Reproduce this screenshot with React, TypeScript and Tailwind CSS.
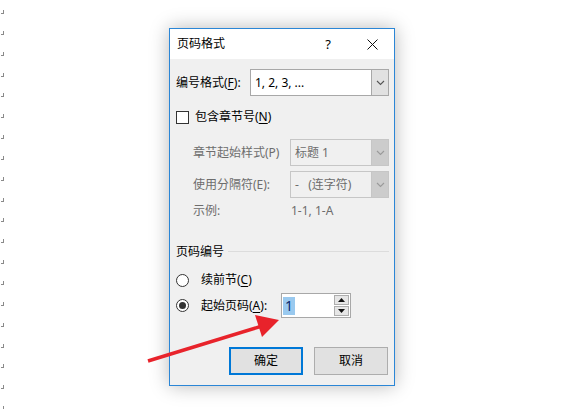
import type { ReactNode } from "react";

const font = { fontFamily: '"Noto Sans", "Noto Sans CJK SC", sans-serif' };

function Chevron({ color = "#606060" }: { color?: string }) {
  return (
    <svg width="9" height="6" viewBox="0 0 9 6">
      <path d="M1 1 L4.5 4.5 L8 1" fill="none" stroke={color} strokeWidth="1.1" />
    </svg>
  );
}

function Select({ value, disabled }: { value: string; disabled?: boolean }) {
  return (
    <div
      className={
        "flex h-[27px] flex-1 border " +
        (disabled ? "border-[#c6c6c6] bg-[#f0f0f0] text-[#6d6d6d]" : "border-[#a8a8a8] bg-white text-black")
      }
    >
      <div className="flex flex-1 items-center whitespace-pre pl-[4px]">{value}</div>
      <div
        className={
          "flex w-[17px] items-center justify-center border-l " +
          (disabled ? "border-[#c6c6c6] bg-[#cccccc]" : "border-[#a8a8a8] bg-[#e1e1e1]")
        }
      >
        <Chevron color={disabled ? "#9a9a9a" : "#555555"} />
      </div>
    </div>
  );
}

function Key({ children }: { children: ReactNode }) {
  return <span className="underline underline-offset-2">{children}</span>;
}

function Radio({ checked }: { checked?: boolean }) {
  return (
    <span className="flex h-[13px] w-[13px] items-center justify-center rounded-full border border-[#333] bg-white">
      {checked && <span className="h-[7px] w-[7px] rounded-full bg-[#333]" />}
    </span>
  );
}

function Marks() {
  return (
    <div className="flex w-[3px] flex-col pt-[10px]">
      {Array.from({ length: 20 }).map((_, i) => (
        <div key={i} className="h-[20.85px] shrink-0">
          <div className="h-[4px] w-[3px] border-b border-r border-[#8a8a8a]" />
        </div>
      ))}
    </div>
  );
}

function Dialog() {
  return (
    <div className="ml-[165px] mt-[28px] flex h-[358px] w-[226px] flex-col border border-[#2b86d6] bg-[#f0f0f0] text-[12px] leading-none shadow-[0_0_18px_rgba(0,0,0,0.28)]">
      {/* title bar */}
      <div className="flex h-[30px] items-center bg-white">
        <div className="flex-1 pl-[7px]">页码格式</div>
        <div className="flex w-[44px] justify-center text-[13px]">?</div>
        <div className="flex w-[44px] justify-center">
          <svg width="11" height="11" viewBox="0 0 11 11">
            <path d="M0.5 0.5 L10.5 10.5 M10.5 0.5 L0.5 10.5" stroke="#111" strokeWidth="1" />
          </svg>
        </div>
      </div>

      <div className="flex flex-col pl-[6px] pr-[5px] pt-[10px]">
        <div className="flex items-center">
          <div className="w-[74px]">
            编号格式(<Key>F</Key>):
          </div>
          <Select value="1, 2, 3, ..." />
        </div>

        <div className="mt-[13px] flex h-[16px] items-center gap-[6px]">
          <span className="h-[13px] w-[13px] border border-[#333] bg-white" />
          <span>
            包含章节号(<Key>N</Key>)
          </span>
        </div>

        <div className="mt-[14px] flex flex-col gap-[5px] pl-[17px] text-[#6d6d6d]">
          <div className="flex items-center">
            <div className="w-[97px]">章节起始样式(P)</div>
            <Select value="标题 1" disabled />
          </div>
          <div className="flex items-center">
            <div className="w-[97px]">使用分隔符(E):</div>
            <Select value={"-   (连字符)"} disabled />
          </div>
          <div className="flex h-[16px] items-center">
            <div className="w-[98px]">示例:</div>
            <div>1-1, 1-A</div>
          </div>
        </div>

        <div className="mt-[25px] flex h-[16px] items-center gap-[4px]">
          <span>页码编号</span>
          <span className="mt-[-2px] h-px flex-1 bg-[#dcdcdc]" />
        </div>

        <div className="mt-[12px] flex h-[16px] items-center gap-[12px]">
          <Radio />
          <span>
            续前节(<Key>C</Key>)
          </span>
        </div>

        <div className="mt-[5px] flex items-center">
          <Radio checked />
          <span className="ml-[12px] w-[80px]">
            起始页码(<Key>A</Key>):
          </span>
          <div className="flex h-[25px] w-[70px] border border-[#a8a8a8] bg-white">
            <div className="flex flex-1 items-center pl-[1px]">
              <span className="flex h-[18px] items-center bg-[#99c9ef] px-[2px] text-[14px] text-[#0a246a]">1</span>
            </div>
            <div className="flex w-[16px] flex-col gap-px py-px pr-px">
              <div className="flex flex-1 items-center justify-center border border-[#adadad] bg-[#e6e6e6]">
                <svg width="7" height="4" viewBox="0 0 7 4">
                  <path d="M0 4 L3.5 0 L7 4 Z" fill="#111" />
                </svg>
              </div>
              <div className="flex flex-1 items-center justify-center border border-[#adadad] bg-[#e6e6e6]">
                <svg width="7" height="4" viewBox="0 0 7 4">
                  <path d="M0 0 L3.5 4 L7 0 Z" fill="#111" />
                </svg>
              </div>
            </div>
          </div>
        </div>

        <div className="mt-[29px] flex justify-end gap-[11px] pr-[1px]">
          <button className="flex h-[28px] w-[74px] items-center justify-center border-2 border-[#0078d7] bg-[#e1e1e1]">
            确定
          </button>
          <button className="flex h-[28px] w-[74px] items-center justify-center border border-[#adadad] bg-[#e1e1e1]">
            取消
          </button>
        </div>
      </div>
    </div>
  );
}

export default function App() {
  return (
    <div className="relative h-[409px] w-[569px] overflow-hidden bg-white text-black" style={font}>
      <div className="flex items-start pl-[1px]">
        <Marks />
        <Dialog />
      </div>
      <svg className="pointer-events-none absolute left-0 top-0" width="569" height="409">
        <line x1="148" y1="361" x2="262" y2="326" stroke="#e8232b" strokeWidth="3.5" />
        <polygon points="279,320 255,315 262,337" fill="#e8232b" />
      </svg>
    </div>
  );
}
